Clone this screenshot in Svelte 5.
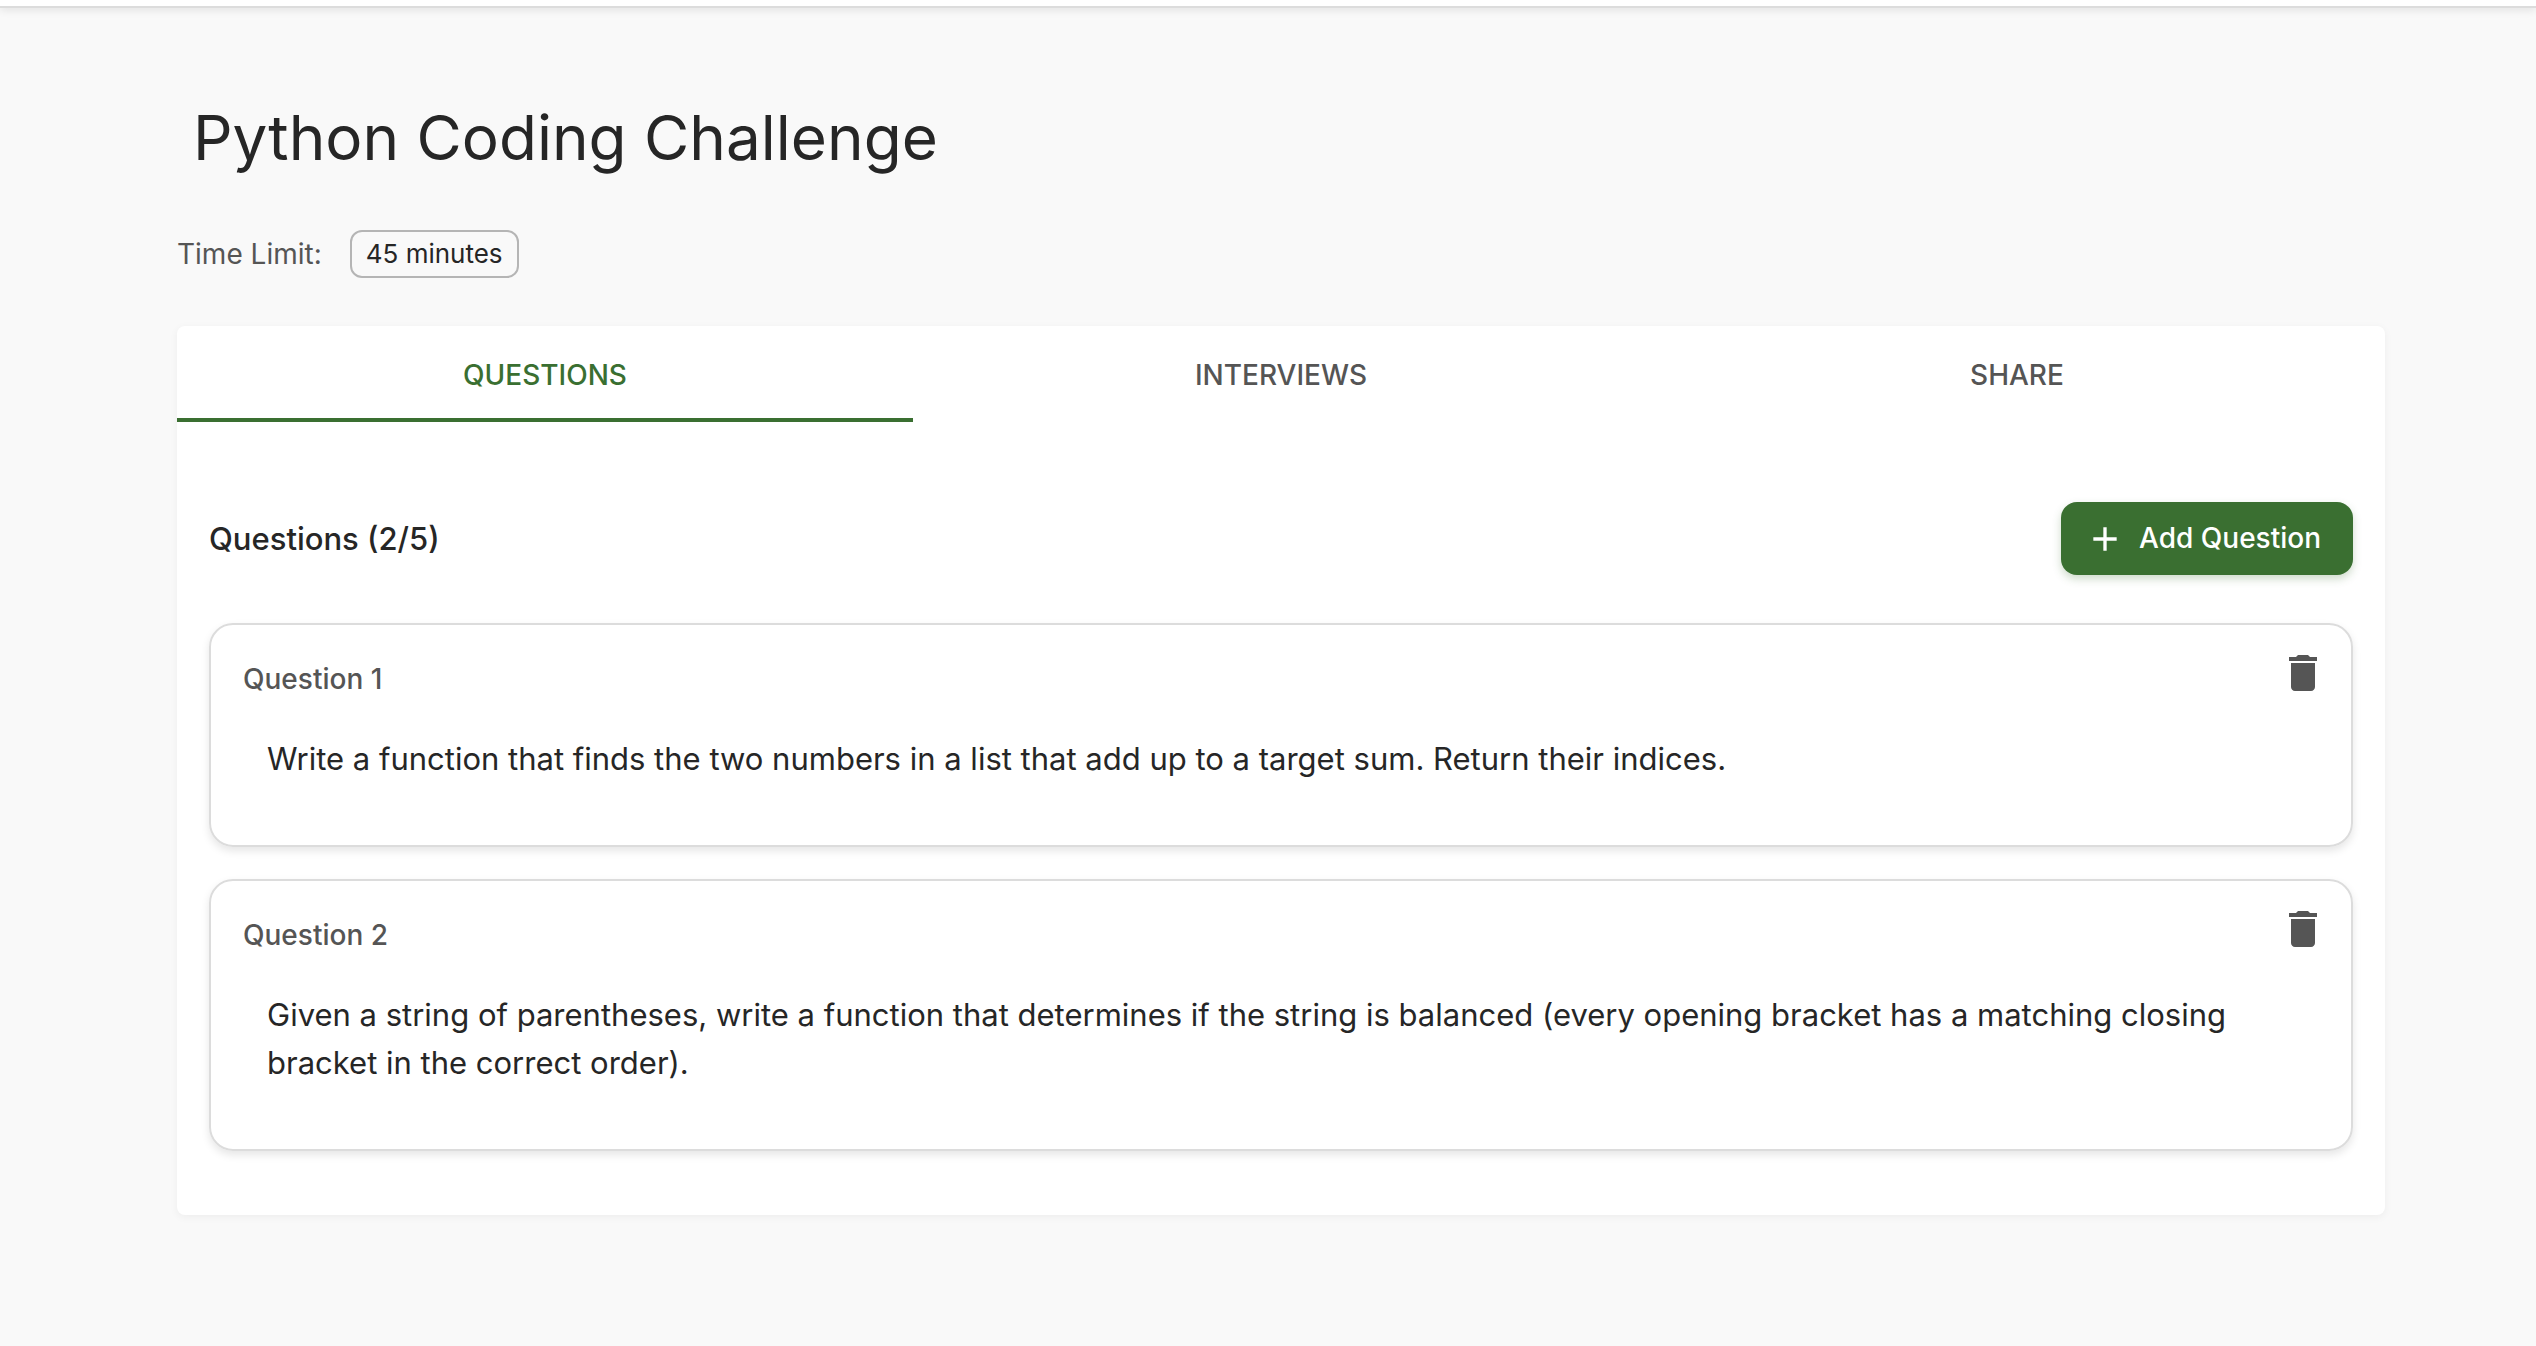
<script lang="ts">
	interface Question {
		id: number;
		text: string;
	}

	const MAX_QUESTIONS = 5;
	const tabs = ['Questions', 'Interviews', 'Share'];

	let activeTab = $state('Questions');
	let nextId = 3;
	let questions: Question[] = $state([
		{
			id: 1,
			text: 'Write a function that finds the two numbers in a list that add up to a target sum. Return their indices.'
		},
		{
			id: 2,
			text: 'Given a string of parentheses, write a function that determines if the string is balanced (every opening bracket has a matching closing bracket in the correct order).'
		}
	]);

	let isFull = $derived(questions.length >= MAX_QUESTIONS);

	function addQuestion() {
		questions.push({ id: nextId++, text: '' });
	}

	function removeQuestion(id: number) {
		questions = questions.filter((q) => q.id !== id);
	}
</script>

<header class="app-bar"></header>

<main class="page">
	<h1>Python Coding Challenge</h1>

	<div class="time-limit">
		<span class="time-label">Time Limit:</span>
		<span class="chip">45 minutes</span>
	</div>

	<section class="panel">
		<div class="tabs" role="tablist">
			{#each tabs as tab}
				<button
					class="tab"
					class:active={activeTab === tab}
					role="tab"
					aria-selected={activeTab === tab}
					onclick={() => (activeTab = tab)}
				>
					{tab}
				</button>
			{/each}
		</div>

		{#if activeTab === 'Questions'}
			<div class="panel-body" role="tabpanel">
				<div class="list-header">
					<h2>Questions ({questions.length}/{MAX_QUESTIONS})</h2>
					<button class="add-btn" onclick={addQuestion} disabled={isFull}>
						<svg viewBox="0 0 24 24" aria-hidden="true">
							<path d="M19 13h-6v6h-2v-6H5v-2h6V5h2v6h6v2z" />
						</svg>
						Add Question
					</button>
				</div>

				<div class="question-list">
					{#each questions as question, i (question.id)}
						<article class="card">
							<div class="card-header">
								<h3>Question {i + 1}</h3>
								<button
									class="delete-btn"
									aria-label="Delete question {i + 1}"
									onclick={() => removeQuestion(question.id)}
								>
									<svg viewBox="0 0 24 24" aria-hidden="true">
										<path d="M6 19c0 1.1.9 2 2 2h8c1.1 0 2-.9 2-2V7H6v12zM19 4h-3.5l-1-1h-5l-1 1H5v2h14V4z" />
									</svg>
								</button>
							</div>
							<p>{question.text}</p>
						</article>
					{/each}
				</div>
			</div>
		{/if}
	</section>
</main>

<style>
	:global(body) {
		background: #f9f9f9;
		color: #262626;
		font-family: Inter, Roboto, 'Liberation Sans', sans-serif;
	}

	h1,
	h2,
	h3,
	p {
		margin: 0;
	}

	button {
		border: none;
		background: none;
		padding: 0;
		font-family: inherit;
		cursor: pointer;
	}

	svg {
		display: block;
		flex-shrink: 0;
		fill: currentColor;
	}

	.app-bar {
		height: 6px;
		background: #fff;
		border-bottom: 2px solid #dcdcdc;
		box-shadow: 0 2px 8px rgba(0, 0, 0, 0.1);
	}

	.page {
		padding: 88px 151px 64px 177px;
	}

	h1 {
		padding: 0 16px;
		font-size: 62px;
		line-height: 84px;
		font-weight: 400;
	}

	.time-limit {
		display: flex;
		align-items: center;
		gap: 28px;
		margin: 50px 0 48px;
	}

	.time-label {
		font-size: 28px;
		line-height: 40px;
		color: #555;
	}

	.chip {
		border: 2px solid #b5b5b5;
		border-radius: 12px;
		padding: 0 14px;
		font-size: 26px;
		line-height: 44px;
	}

	.panel {
		background: #fff;
		border-radius: 8px;
		box-shadow: 0 2px 8px rgba(0, 0, 0, 0.05);
	}

	.tabs {
		display: grid;
		grid-template-columns: repeat(3, 1fr);
	}

	.tab {
		height: 96px;
		padding-top: 6px;
		border-bottom: 4px solid transparent;
		font-size: 28px;
		font-weight: 500;
		text-transform: uppercase;
		color: #555;
	}

	.tab.active {
		color: #3a6f31;
		border-bottom-color: #3a6f31;
	}

	.panel-body {
		padding: 80px 32px 64px;
	}

	.list-header {
		display: flex;
		align-items: center;
		justify-content: space-between;
		margin-bottom: 48px;
	}

	h2 {
		font-size: 31px;
		line-height: 48px;
		font-weight: 500;
	}

	.add-btn {
		display: flex;
		align-items: center;
		gap: 14px;
		padding: 12px 32px 12px 24px;
		border-radius: 16px;
		background: #3a6f31;
		box-shadow: 0 4px 8px rgba(58, 111, 49, 0.25);
		color: #fff;
		font-size: 28px;
		line-height: 49px;
		font-weight: 500;
	}

	.add-btn svg {
		width: 40px;
		height: 40px;
	}

	.question-list {
		display: flex;
		flex-direction: column;
		gap: 32px;
	}

	.card {
		border: 2px solid #dcdcdc;
		border-radius: 24px;
		padding: 24px 24px 62px 32px;
		box-shadow: 0 4px 8px rgba(0, 0, 0, 0.1);
	}

	.card-header {
		display: flex;
		align-items: flex-end;
		justify-content: space-between;
		margin-bottom: 38px;
	}

	h3 {
		font-size: 28px;
		line-height: 36px;
		font-weight: 500;
		color: #555;
	}

	.delete-btn {
		color: #555;
	}

	.delete-btn svg {
		width: 48px;
		height: 48px;
	}

	.card p {
		padding: 0 80px 0 24px;
		font-size: 31px;
		line-height: 48px;
	}
</style>
